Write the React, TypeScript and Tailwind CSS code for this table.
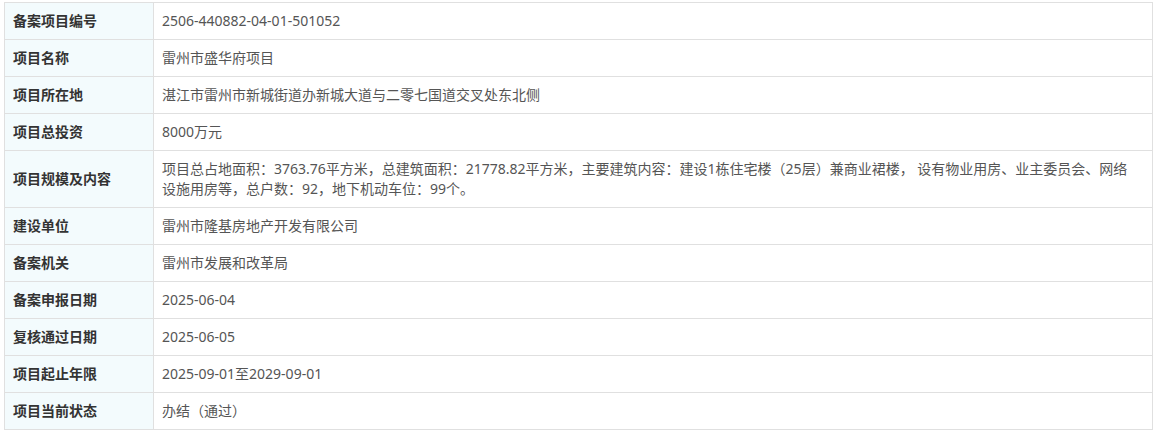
import React from "react";

const rows: [string, string][] = [
  ["备案项目编号", "2506-440882-04-01-501052"],
  ["项目名称", "雷州市盛华府项目"],
  ["项目所在地", "湛江市雷州市新城街道办新城大道与二零七国道交叉处东北侧"],
  ["项目总投资", "8000万元"],
  [
    "项目规模及内容",
    "项目总占地面积：3763.76平方米，总建筑面积：21778.82平方米，主要建筑内容：建设1栋住宅楼（25层）兼商业裙楼， 设有物业用房、业主委员会、网络设施用房等，总户数：92，地下机动车位：99个。",
  ],
  ["建设单位", "雷州市隆基房地产开发有限公司"],
  ["备案机关", "雷州市发展和改革局"],
  ["备案申报日期", "2025-06-04"],
  ["复核通过日期", "2025-06-05"],
  ["项目起止年限", "2025-09-01至2029-09-01"],
  ["项目当前状态", "办结（通过）"],
];

export default function App() {
  return (
    <div className="bg-white pl-1 pt-[2px] font-['Microsoft_YaHei','Noto_Sans','Noto_Sans_CJK_SC',sans-serif] text-[14px]">
      <table className="w-[1149px] border-collapse">
        <tbody>
          {rows.map(([k, v]) => (
            <tr key={k}>
              <th className="h-[37px] w-[149px] border border-[#e0e0e0] bg-[#f3fbfd] px-2 text-left align-middle font-bold leading-5 text-[#333]">
                {k}
              </th>
              <td className="h-[37px] border border-[#e0e0e0] py-2 pl-2 pr-4 align-middle leading-5 text-[#555]">
                {v}
              </td>
            </tr>
          ))}
        </tbody>
      </table>
    </div>
  );
}
